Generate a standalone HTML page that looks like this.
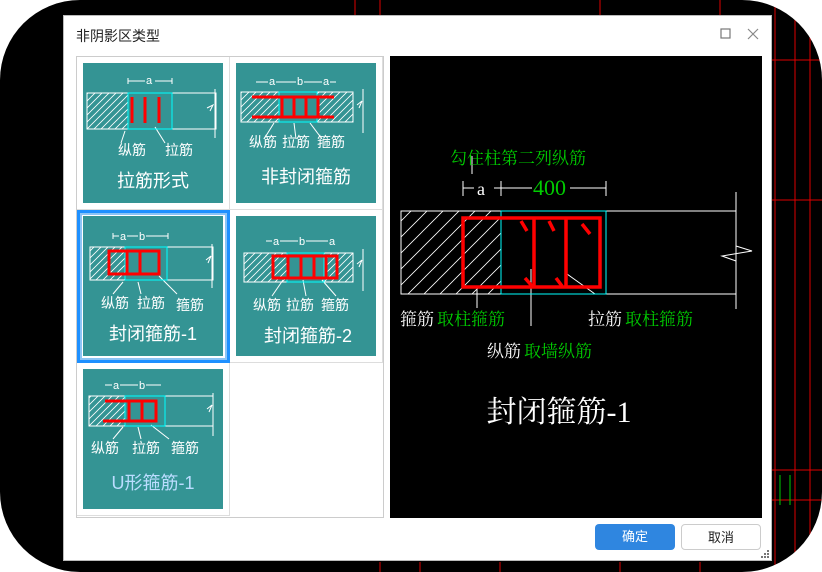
<!DOCTYPE html>
<html><head><meta charset="utf-8"><style>
*{margin:0;padding:0;box-sizing:border-box}
body{width:822px;height:572px;background:#fff;position:relative;overflow:hidden;font-family:"Liberation Sans","Noto Sans CJK SC",sans-serif}
.bg{position:absolute;left:0;top:0;width:822px;height:572px;background:#000;border-radius:80px;overflow:hidden}
.dlg{position:absolute;left:63px;top:15px;width:709px;height:546px;background:#fff;border:1px solid #bbb}
.title{position:absolute;left:12px;top:10px;font-size:14px;color:#222}
.grid{position:absolute;left:12px;top:40px;width:308px;height:462px;border:1px solid #ccc;background:#fff}
.cell{position:absolute;width:153px;height:153px;border-right:1px solid #ddd;border-bottom:1px solid #ddd}
.tile{position:absolute;left:6px;top:6px;width:140px;height:140px;background:#349494}
.sel{border:3px solid #1e90ff;box-shadow:inset 0 0 0 2px #8cc4f5}
.sel .tile{left:3px;top:3px}
.prev{position:absolute;left:326px;top:40px;width:372px;height:462px;background:#000}
.btn{position:absolute;top:508px;width:80px;height:26px;border-radius:4px;font-size:13px;text-align:center;line-height:26px}
svg text{font-family:"Liberation Sans","Noto Sans CJK SC",sans-serif}
.prev svg text{font-family:"Liberation Serif","Noto Serif CJK SC",serif}
</style></head><body>
<div class="bg">
<svg width="822" height="572" style="position:absolute;left:0;top:0">
<g stroke="#d00" stroke-width="1">
<line x1="775" y1="0" x2="775" y2="572"/><line x1="795" y1="0" x2="795" y2="572"/><line x1="810" y1="0" x2="810" y2="572"/>
<line x1="772" y1="60" x2="822" y2="60"/><line x1="772" y1="200" x2="822" y2="200"/><line x1="772" y1="470" x2="822" y2="470"/><line x1="772" y1="500" x2="822" y2="500"/>
<line x1="380" y1="562" x2="380" y2="572"/><line x1="420" y1="562" x2="420" y2="572"/><line x1="500" y1="562" x2="500" y2="572"/><line x1="620" y1="562" x2="620" y2="572"/><line x1="700" y1="562" x2="700" y2="572"/>
<line x1="355" y1="0" x2="355" y2="15"/><line x1="380" y1="0" x2="380" y2="15"/><line x1="600" y1="0" x2="600" y2="15"/><line x1="720" y1="0" x2="720" y2="15"/>
</g>
<g stroke="#0c0" fill="none"><line x1="780" y1="475" x2="780" y2="505"/><line x1="790" y1="475" x2="790" y2="505"/></g>
</svg>
</div>
<div class="dlg">
<div class="title">非阴影区类型</div>
<svg width="50" height="20" style="position:absolute;left:652px;top:10px"><rect x="5" y="3" width="9" height="9" fill="none" stroke="#777" stroke-width="1.2"/><path d="M32 3 L42 13 M42 3 L32 13" stroke="#888" stroke-width="1.2"/></svg>
<div class="grid">
<div class="cell" style="left:0;top:0"><div class="tile">
<svg width="140" height="140"><defs><pattern id="h" width="7" height="7" patternUnits="userSpaceOnUse"><path d="M0 7 L7 0 M-1 1 L1 -1 M6 8 L8 6" stroke="#fff" stroke-width="0.8"/></pattern></defs>
<g stroke="#fff" fill="none"><rect x="4" y="30" width="129" height="36"/><rect x="4" y="30" width="41" height="36" fill="url(#h)"/><line x1="132" y1="26" x2="132" y2="75"/><path d="M124 45 L130 42 L127 48"/><path d="M45 18 H89 M45 15 V21 M89 15 V21"/><line x1="42" y1="68" x2="38" y2="80"/><line x1="72" y1="64" x2="82" y2="80"/></g>
<rect x="45" y="30" width="44" height="36" fill="none" stroke="#0ff"/>
<g stroke="#f00" stroke-width="3"><line x1="49" y1="34" x2="49" y2="60"/><line x1="62" y1="34" x2="62" y2="60"/><line x1="76" y1="34" x2="76" y2="60"/></g>
<rect x="62" y="12" width="10" height="10" fill="#349494"/><text x="63" y="21" fill="#fff" font-size="11">a</text>
<g fill="#fff" font-size="14"><text x="35" y="92">纵筋</text><text x="82" y="92">拉筋</text></g>
<text x="70" y="124" fill="#fff" font-size="18" text-anchor="middle">拉筋形式</text></svg></div></div>
<div class="cell" style="left:153px;top:0"><div class="tile">
<svg width="140" height="140">
<g stroke="#fff" fill="none"><rect x="5" y="29" width="112" height="30" fill="url(#h)"/><rect x="43" y="29" width="38" height="30" fill="#349494"/><line x1="127" y1="26" x2="127" y2="70"/><path d="M121 42 L126 38 L123 45"/><path d="M20 19 H100"/><line x1="38" y1="60" x2="28" y2="76"/><line x1="58" y1="60" x2="60" y2="76"/><line x1="74" y1="60" x2="86" y2="76"/></g>
<rect x="43" y="29" width="38" height="30" fill="none" stroke="#0ff"/>
<g stroke="#f00" stroke-width="3" fill="none"><line x1="16" y1="34" x2="98" y2="34"/><line x1="16" y1="54" x2="98" y2="54"/><line x1="46" y1="34" x2="46" y2="54"/><line x1="58" y1="34" x2="58" y2="54"/><line x1="70" y1="34" x2="70" y2="54"/><line x1="82" y1="34" x2="82" y2="54"/></g>
<g fill="#349494"><rect x="32" y="12" width="8" height="12"/><rect x="60" y="12" width="8" height="12"/><rect x="86" y="12" width="8" height="12"/></g>
<g fill="#fff" font-size="11"><text x="33" y="22">a</text><text x="61" y="22">b</text><text x="87" y="22">a</text></g>
<g fill="#fff" font-size="14"><text x="13" y="84">纵筋</text><text x="46" y="84">拉筋</text><text x="81" y="84">箍筋</text></g>
<text x="70" y="120" fill="#fff" font-size="18" text-anchor="middle">非封闭箍筋</text></svg></div></div>
<div class="cell sel" style="left:0;top:153px"><div class="tile">
<svg width="140" height="140">
<g stroke="#fff" fill="none"><rect x="7" y="31" width="123" height="33"/><rect x="7" y="31" width="35" height="33" fill="url(#h)"/><line x1="129" y1="28" x2="129" y2="72"/><path d="M123 44 L128 40 L125 47"/><path d="M30 20 H85 M30 17 V23 M85 17 V23"/><line x1="40" y1="66" x2="30" y2="78"/><line x1="55" y1="66" x2="58" y2="78"/><line x1="76" y1="60" x2="94" y2="78"/></g>
<rect x="42" y="31" width="42" height="33" fill="none" stroke="#0ff"/>
<g stroke="#f00" stroke-width="3" fill="none"><rect x="26" y="35" width="50" height="23"/><line x1="44" y1="35" x2="44" y2="58"/><line x1="57" y1="35" x2="57" y2="58"/></g>
<g fill="#349494"><rect x="36" y="14" width="8" height="12"/><rect x="55" y="14" width="8" height="12"/></g>
<g fill="#fff" font-size="11"><text x="37" y="24">a</text><text x="56" y="24">b</text></g>
<g fill="#fff" font-size="14"><text x="18" y="92">纵筋</text><text x="54" y="92">拉筋</text><text x="93" y="94">箍筋</text></g>
<text x="70" y="124" fill="#fff" font-size="18" text-anchor="middle">封闭箍筋-1</text></svg></div></div>
<div class="cell" style="left:153px;top:153px"><div class="tile">
<svg width="140" height="140">
<g stroke="#fff" fill="none"><rect x="8" y="37" width="109" height="29" fill="url(#h)"/><rect x="51" y="37" width="37" height="29" fill="#349494"/><line x1="127" y1="33" x2="127" y2="75"/><path d="M121 48 L126 44 L123 51"/><path d="M30 25 H100"/><line x1="47" y1="64" x2="36" y2="80"/><line x1="67" y1="64" x2="70" y2="80"/><line x1="86" y1="64" x2="100" y2="80"/></g>
<rect x="51" y="37" width="37" height="29" fill="none" stroke="#0ff"/>
<g stroke="#f00" stroke-width="3" fill="none"><rect x="37" y="40" width="64" height="22"/><line x1="52" y1="40" x2="52" y2="62"/><line x1="65" y1="40" x2="65" y2="62"/><line x1="78" y1="40" x2="78" y2="62"/><line x1="90" y1="40" x2="90" y2="62"/></g>
<g fill="#349494"><rect x="36" y="18" width="8" height="12"/><rect x="62" y="18" width="8" height="12"/><rect x="92" y="18" width="8" height="12"/></g>
<g fill="#fff" font-size="11"><text x="37" y="29">a</text><text x="63" y="29">b</text><text x="93" y="29">a</text></g>
<g fill="#fff" font-size="14"><text x="17" y="94">纵筋</text><text x="50" y="94">拉筋</text><text x="85" y="94">箍筋</text></g>
<text x="72" y="126" fill="#fff" font-size="18" text-anchor="middle">封闭箍筋-2</text></svg></div></div>
<div class="cell" style="left:0;top:306px"><div class="tile">
<svg width="140" height="140">
<g stroke="#fff" fill="none"><rect x="6" y="27" width="124" height="30"/><rect x="6" y="27" width="36" height="30" fill="url(#h)"/><line x1="130" y1="24" x2="130" y2="67"/><path d="M124 40 L129 36 L126 43"/><path d="M22 16 H78"/><line x1="40" y1="58" x2="30" y2="70"/><line x1="55" y1="58" x2="58" y2="70"/><line x1="68" y1="56" x2="86" y2="70"/></g>
<rect x="42" y="27" width="40" height="30" fill="none" stroke="#0ff"/>
<g stroke="#f00" stroke-width="3" fill="none"><path d="M22 32 H73 V52 H20"/><line x1="46" y1="32" x2="46" y2="52"/><line x1="59" y1="32" x2="59" y2="52"/></g>
<g fill="#349494"><rect x="29" y="10" width="8" height="12"/><rect x="55" y="10" width="8" height="12"/></g>
<g fill="#fff" font-size="11"><text x="30" y="20">a</text><text x="56" y="20">b</text></g>
<g fill="#fff" font-size="14"><text x="8" y="84">纵筋</text><text x="49" y="84">拉筋</text><text x="88" y="84">箍筋</text></g>
<text x="70" y="120" fill="#bdf" font-size="18" text-anchor="middle">U形箍筋-1</text></svg></div></div>
</div>
<div class="prev">
<svg width="372" height="462">
<defs><pattern id="H" width="16" height="16" patternUnits="userSpaceOnUse"><path d="M0 16 L16 0 M-2 2 L2 -2 M14 18 L18 14" stroke="#fff" stroke-width="0.8"/></pattern></defs>
<g stroke="#fff" fill="none"><rect x="11" y="155" width="335" height="83"/><rect x="11" y="155" width="100" height="83" fill="url(#H)"/><line x1="346" y1="136" x2="346" y2="253"/><path d="M346 190 L362 195 L332 200 L346 205"/>
<path d="M73 132 H216 M73 125 V140 M111 125 V140 M216 125 V140 M82 118 V100"/><line x1="87" y1="233" x2="87" y2="252"/><line x1="141" y1="213" x2="141" y2="270"/><line x1="177" y1="218" x2="205" y2="238"/></g>
<rect x="111" y="155" width="105" height="83" fill="none" stroke="#0ff"/>
<g stroke="#f00" stroke-width="3.5" fill="none"><rect x="73" y="162" width="137" height="69"/><line x1="144" y1="162" x2="144" y2="231"/><line x1="176" y1="162" x2="176" y2="231"/><path d="M131 165 L137 175 M159 165 L164 175 M192 168 L200 178 M135 222 L142 230 M166 222 L172 230"/></g>
<rect x="84" y="122" width="20" height="20" fill="#000"/><rect x="142" y="120" width="38" height="22" fill="#000"/>
<text x="87" y="139" fill="#fff" font-size="18">a</text>
<text x="143" y="139" fill="#0c0" font-size="22">400</text>
<text x="60" y="108" fill="#0c0" font-size="17">勾住柱第二列纵筋</text>
<text x="10" y="269" font-size="17"><tspan fill="#fff">箍筋</tspan><tspan fill="#0c0" dx="3">取柱箍筋</tspan></text>
<text x="198" y="269" font-size="17"><tspan fill="#fff">拉筋</tspan><tspan fill="#0c0" dx="3">取柱箍筋</tspan></text>
<text x="97" y="301" font-size="17"><tspan fill="#fff">纵筋</tspan><tspan fill="#0c0" dx="3">取墙纵筋</tspan></text>
<text x="169" y="366" fill="#fff" font-size="30" text-anchor="middle">封闭箍筋-1</text>
</svg></div>
<div class="btn" style="left:531px;background:#2f86e0;color:#fff">确定</div>
<div class="btn" style="left:617px;border:1px solid #ccc;color:#222;background:#fff">取消</div>
<svg width="10" height="10" style="position:absolute;left:697px;top:534px" fill="#777"><rect x="6" y="0" width="2" height="2"/><rect x="3" y="3" width="2" height="2"/><rect x="6" y="3" width="2" height="2"/><rect x="0" y="6" width="2" height="2"/><rect x="3" y="6" width="2" height="2"/><rect x="6" y="6" width="2" height="2"/></svg>
</div>
</body></html>
